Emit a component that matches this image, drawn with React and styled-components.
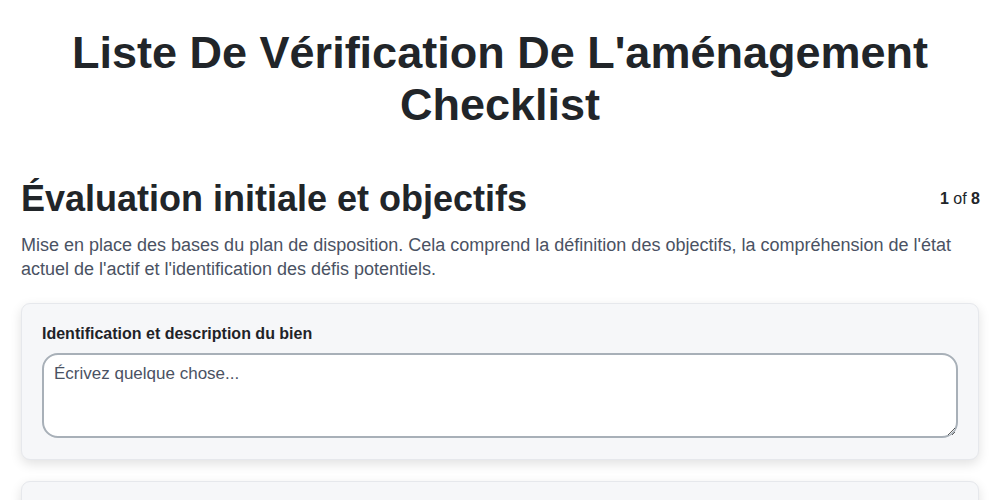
import React from "react";
import styled, { createGlobalStyle } from "styled-components";

const Global = createGlobalStyle`
  * { box-sizing: border-box; }
  body {
    margin: 0;
    background: #ffffff;
    font-family: "Liberation Sans", Arial, sans-serif;
    color: #212529;
  }
`;

const Page = styled.div`
  padding: 0 21px;
`;

const Title = styled.h1`
  margin: 27px 0 0;
  text-align: center;
  font-size: 45px;
  line-height: 52px;
  font-weight: 700;
  color: #212529;
`;

const Section = styled.section`
  margin-top: 46px;
  display: flex;
  flex-direction: column;
`;

const HeaderRow = styled.div`
  display: flex;
  align-items: center;
  justify-content: space-between;
`;

const Heading = styled.h2`
  margin: 0;
  font-size: 36px;
  line-height: 44px;
  font-weight: 700;
  color: #212529;
`;

const Counter = styled.div`
  font-size: 16px;
  color: #212529;
  margin-right: -1px;
  b { font-weight: 700; }
`;

const Description = styled.p`
  margin: 12px 0 1px;
  font-size: 18px;
  line-height: 24px;
  color: #4a5263;
`;

const Card = styled.div`
  margin-top: 21px;
  background: #f6f7f9;
  border: 1px solid #e6e8ec;
  border-radius: 9px;
  box-shadow: 0 4px 12px rgba(0, 0, 0, 0.12);
  padding: 20px 20px 21px;
`;

const Label = styled.label`
  display: block;
  font-size: 16px;
  line-height: 20px;
  font-weight: 700;
  color: #1f2328;
  margin-bottom: 9px;
`;

const TextArea = styled.textarea`
  display: block;
  width: 100%;
  height: 85px;
  border: 2px solid #a8b0b8;
  border-radius: 16px;
  background: #ffffff;
  padding: 9px 10px;
  font-family: "Liberation Sans", Arial, sans-serif;
  font-size: 17px;
  line-height: 20px;
  color: #212529;
  resize: vertical;
  outline: none;
  &::placeholder { color: #4a5263; opacity: 1; }
`;

export default function App() {
  return (
    <>
      <Global />
      <Page>
        <Title>
          Liste De Vérification De L'aménagement
          <br />
          Checklist
        </Title>
        <Section>
          <HeaderRow>
            <Heading>Évaluation initiale et objectifs</Heading>
            <Counter>
              <b>1</b> of <b>8</b>
            </Counter>
          </HeaderRow>
          <Description>
            Mise en place des bases du plan de disposition. Cela comprend la définition des objectifs, la compréhension de l'état actuel de l'actif et l'identification des défis potentiels.
          </Description>
          <Card>
            <Label>Identification et description du bien</Label>
            <TextArea placeholder="Écrivez quelque chose..." />
          </Card>
          <Card>
            <Label>Objectifs</Label>
            <TextArea placeholder="Écrivez quelque chose..." />
          </Card>
        </Section>
      </Page>
    </>
  );
}
